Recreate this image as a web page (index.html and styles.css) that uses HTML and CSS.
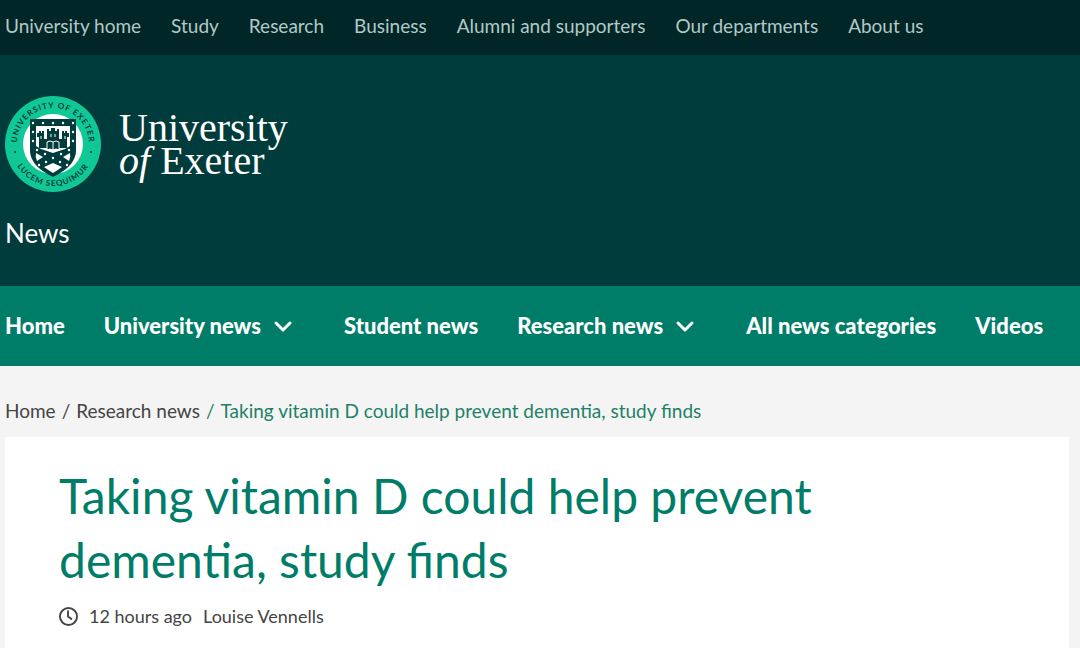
FILE: index.html
```html
<!DOCTYPE html>
<html lang="en">
<head>
    <meta charset="UTF-8">
    <meta name="viewport" content="width=device-width, initial-scale=1.0">
    <title>Taking vitamin D could help prevent dementia, study finds - News</title>
    <link rel="stylesheet" href="styles.css">
</head>
<body>
    <nav class="top-nav" aria-label="University">
        <a href="#">University home</a>
        <a href="#">Study</a>
        <a href="#">Research</a>
        <a href="#">Business</a>
        <a href="#">Alumni and supporters</a>
        <a href="#">Our departments</a>
        <a href="#">About us</a>
    </nav>

    <header class="site-header">
        <a class="logo" href="#">
            <svg class="crest" viewBox="0 0 96 96" aria-hidden="true">
                <defs>
                    <path id="arc-top" d="M16 64.500 A36 36 0 1 1 80 64.500"/>
                    <path id="arc-bottom" d="M6 48 A42 42 0 0 0 90 48"/>
                </defs>
                <circle cx="48" cy="48" r="48" fill="#0fc896"/>
                <circle cx="48" cy="48" r="30" fill="#fff"/>
                <text class="crest-text"><textPath href="#arc-top" startOffset="50%" text-anchor="middle">UNIVERSITY OF EXETER</textPath></text>
                <text class="crest-text"><textPath href="#arc-bottom" startOffset="50%" text-anchor="middle">LUCEM SEQUIMUR</textPath></text>
                <circle cx="10" cy="56" r="1" fill="#003c3c"/>
                <circle cx="86" cy="56" r="1" fill="#003c3c"/>
                <!-- shield -->
                <path d="M25 23 H71 V54 C71 67 60 75 48 81 C36 75 25 67 25 54 Z" fill="#003c3c"/>
                <path d="M31 30 H65 V50 L60 53 L48 57 L36 53 L31 50 Z" fill="#fff"/>
                <path d="M31 57 L38 61 L32 65 Q30 61 31 57 Z M65 57 L58 61 L64 65 Q66 61 65 57 Z M48 67 L57 71 Q53 74 48 77 Q43 74 39 71 Z" fill="#fff"/>
                <!-- castle -->
                <path d="M32 37 H34 V35 H36 V37 H37 V35 H39 V43 H42 V33 H44 V35 H46 V32 H50 V35 H52 V33 H54 V43 H57 V35 H59 V37 H60 V35 H62 V37 H64 V41 H62 V52 H34 V41 H32 Z" fill="#003c3c"/>
                <path d="M36 40 V43 M60 40 V43 M46 38 V41 M50 38 V41" stroke="#fff" stroke-width="1"/>
                <path d="M42 46 Q45 44 48 46 Q51 44 54 46 V54 Q51 52 48 54 Q45 52 42 54 Z" fill="#003c3c" stroke="#fff" stroke-width="1"/>
                <path d="M48 46 V54" stroke="#fff" stroke-width="1"/>
                <g fill="#fff">
                    <circle cx="28" cy="27" r="1.200"/><circle cx="38" cy="27" r="1.200"/><circle cx="48" cy="27" r="1.200"/><circle cx="58" cy="27" r="1.200"/><circle cx="68" cy="27" r="1.200"/>
                    <circle cx="28" cy="36" r="1.200"/><circle cx="28" cy="45" r="1.200"/><circle cx="68" cy="36" r="1.200"/><circle cx="68" cy="45" r="1.200"/>
                    <circle cx="32" cy="54" r="1.200"/><circle cx="40" cy="58" r="1.200"/><circle cx="48" cy="62" r="1.200"/><circle cx="56" cy="58" r="1.200"/><circle cx="64" cy="54" r="1.200"/>
                    <circle cx="41" cy="66" r="1.200"/><circle cx="34" cy="69" r="1.200"/><circle cx="55" cy="66" r="1.200"/><circle cx="62" cy="69" r="1.200"/>
                </g>
            </svg>
            <span class="wordmark">University<br><em>of</em> Exeter</span>
        </a>
        <a class="site-name" href="#">News</a>
    </header>

    <nav class="main-nav" aria-label="News">
        <a href="#">Home</a>
        <a class="has-menu" href="#">University news
            <svg class="chevron" viewBox="0 0 16 10" aria-hidden="true"><path d="M1 2 L8 9 L15 2"/></svg>
        </a>
        <a href="#">Student news</a>
        <a class="has-menu" href="#">Research news
            <svg class="chevron" viewBox="0 0 16 10" aria-hidden="true"><path d="M1 2 L8 9 L15 2"/></svg>
        </a>
        <a href="#">All news categories</a>
        <a href="#">Videos</a>
    </nav>

    <main>
        <nav class="breadcrumb" aria-label="Breadcrumb">
            <a href="#">Home</a>
            <span>/</span>
            <a href="#">Research news</a>
            <span class="current">/</span>
            <span class="current">Taking vitamin D could help prevent dementia, study finds</span>
        </nav>
        <article class="article">
            <h1>Taking vitamin D could help prevent dementia, study finds</h1>
            <div class="meta">
                <svg class="clock" viewBox="0 0 20 20" aria-hidden="true"><circle cx="10" cy="10" r="9"/><path d="M9.500 4.500 V10 L13 12.500"/></svg>
                <span>12 hours ago</span>
                <span>Louise Vennells</span>
            </div>
        </article>
    </main>
</body>
</html>
```
FILE: styles.css
```css
* { box-sizing: border-box; }
body { margin: 0; background: #f4f4f4; color: #444; font-family: Lato, sans-serif; font-size: 19px; line-height: 24px; }
a { color: inherit; text-decoration: none; }
a:hover { text-decoration: underline; }

.top-nav { display: flex; gap: 30px; padding: 14px 5px 17px; background: #002627; color: #b5c8c6; white-space: nowrap; }

.site-header { padding: 41px 5px 37px; background: #003c3c; color: #fff; }
.logo { display: flex; align-items: center; gap: 18px; }
.logo:hover { text-decoration: none; }
.crest { width: 96px; height: 96px; }
.crest-text { fill: #003c3c; font-family: Lato, sans-serif; font-size: 8px; font-weight: 700; letter-spacing: 1px; }
.wordmark { font-family: "Liberation Serif", serif; font-size: 40px; line-height: 33px; }
.site-name { display: block; margin-top: 25px; font-size: 26px; line-height: 32px; }

.main-nav { display: flex; align-items: center; gap: 39px; min-height: 80px; padding: 0 5px; background: #007d69; color: #fff; font-size: 22px; font-weight: 900; white-space: nowrap; }
.has-menu { display: flex; align-items: center; gap: 14px; padding-right: 14px; }
.chevron { width: 16px; height: 10px; overflow: visible; fill: none; stroke: #fff; stroke-width: 3; stroke-linecap: round; stroke-linejoin: round; }

.breadcrumb { display: flex; gap: 6px; padding: 33px 5px 14px; }
.current { color: #1f8068; }

.article { min-height: 240px; margin: 0 11px 0 5px; padding: 27px 54px; background: #fff; }
h1 { max-width: 800px; margin: 0; color: #007d69; font-size: 48px; font-weight: 400; line-height: 64px; }
.meta { display: flex; align-items: center; gap: 11px; margin-top: 12px; font-size: 18px; }
.clock { width: 19px; height: 19px; fill: none; stroke: #444; stroke-width: 2; stroke-linecap: round; }
```
